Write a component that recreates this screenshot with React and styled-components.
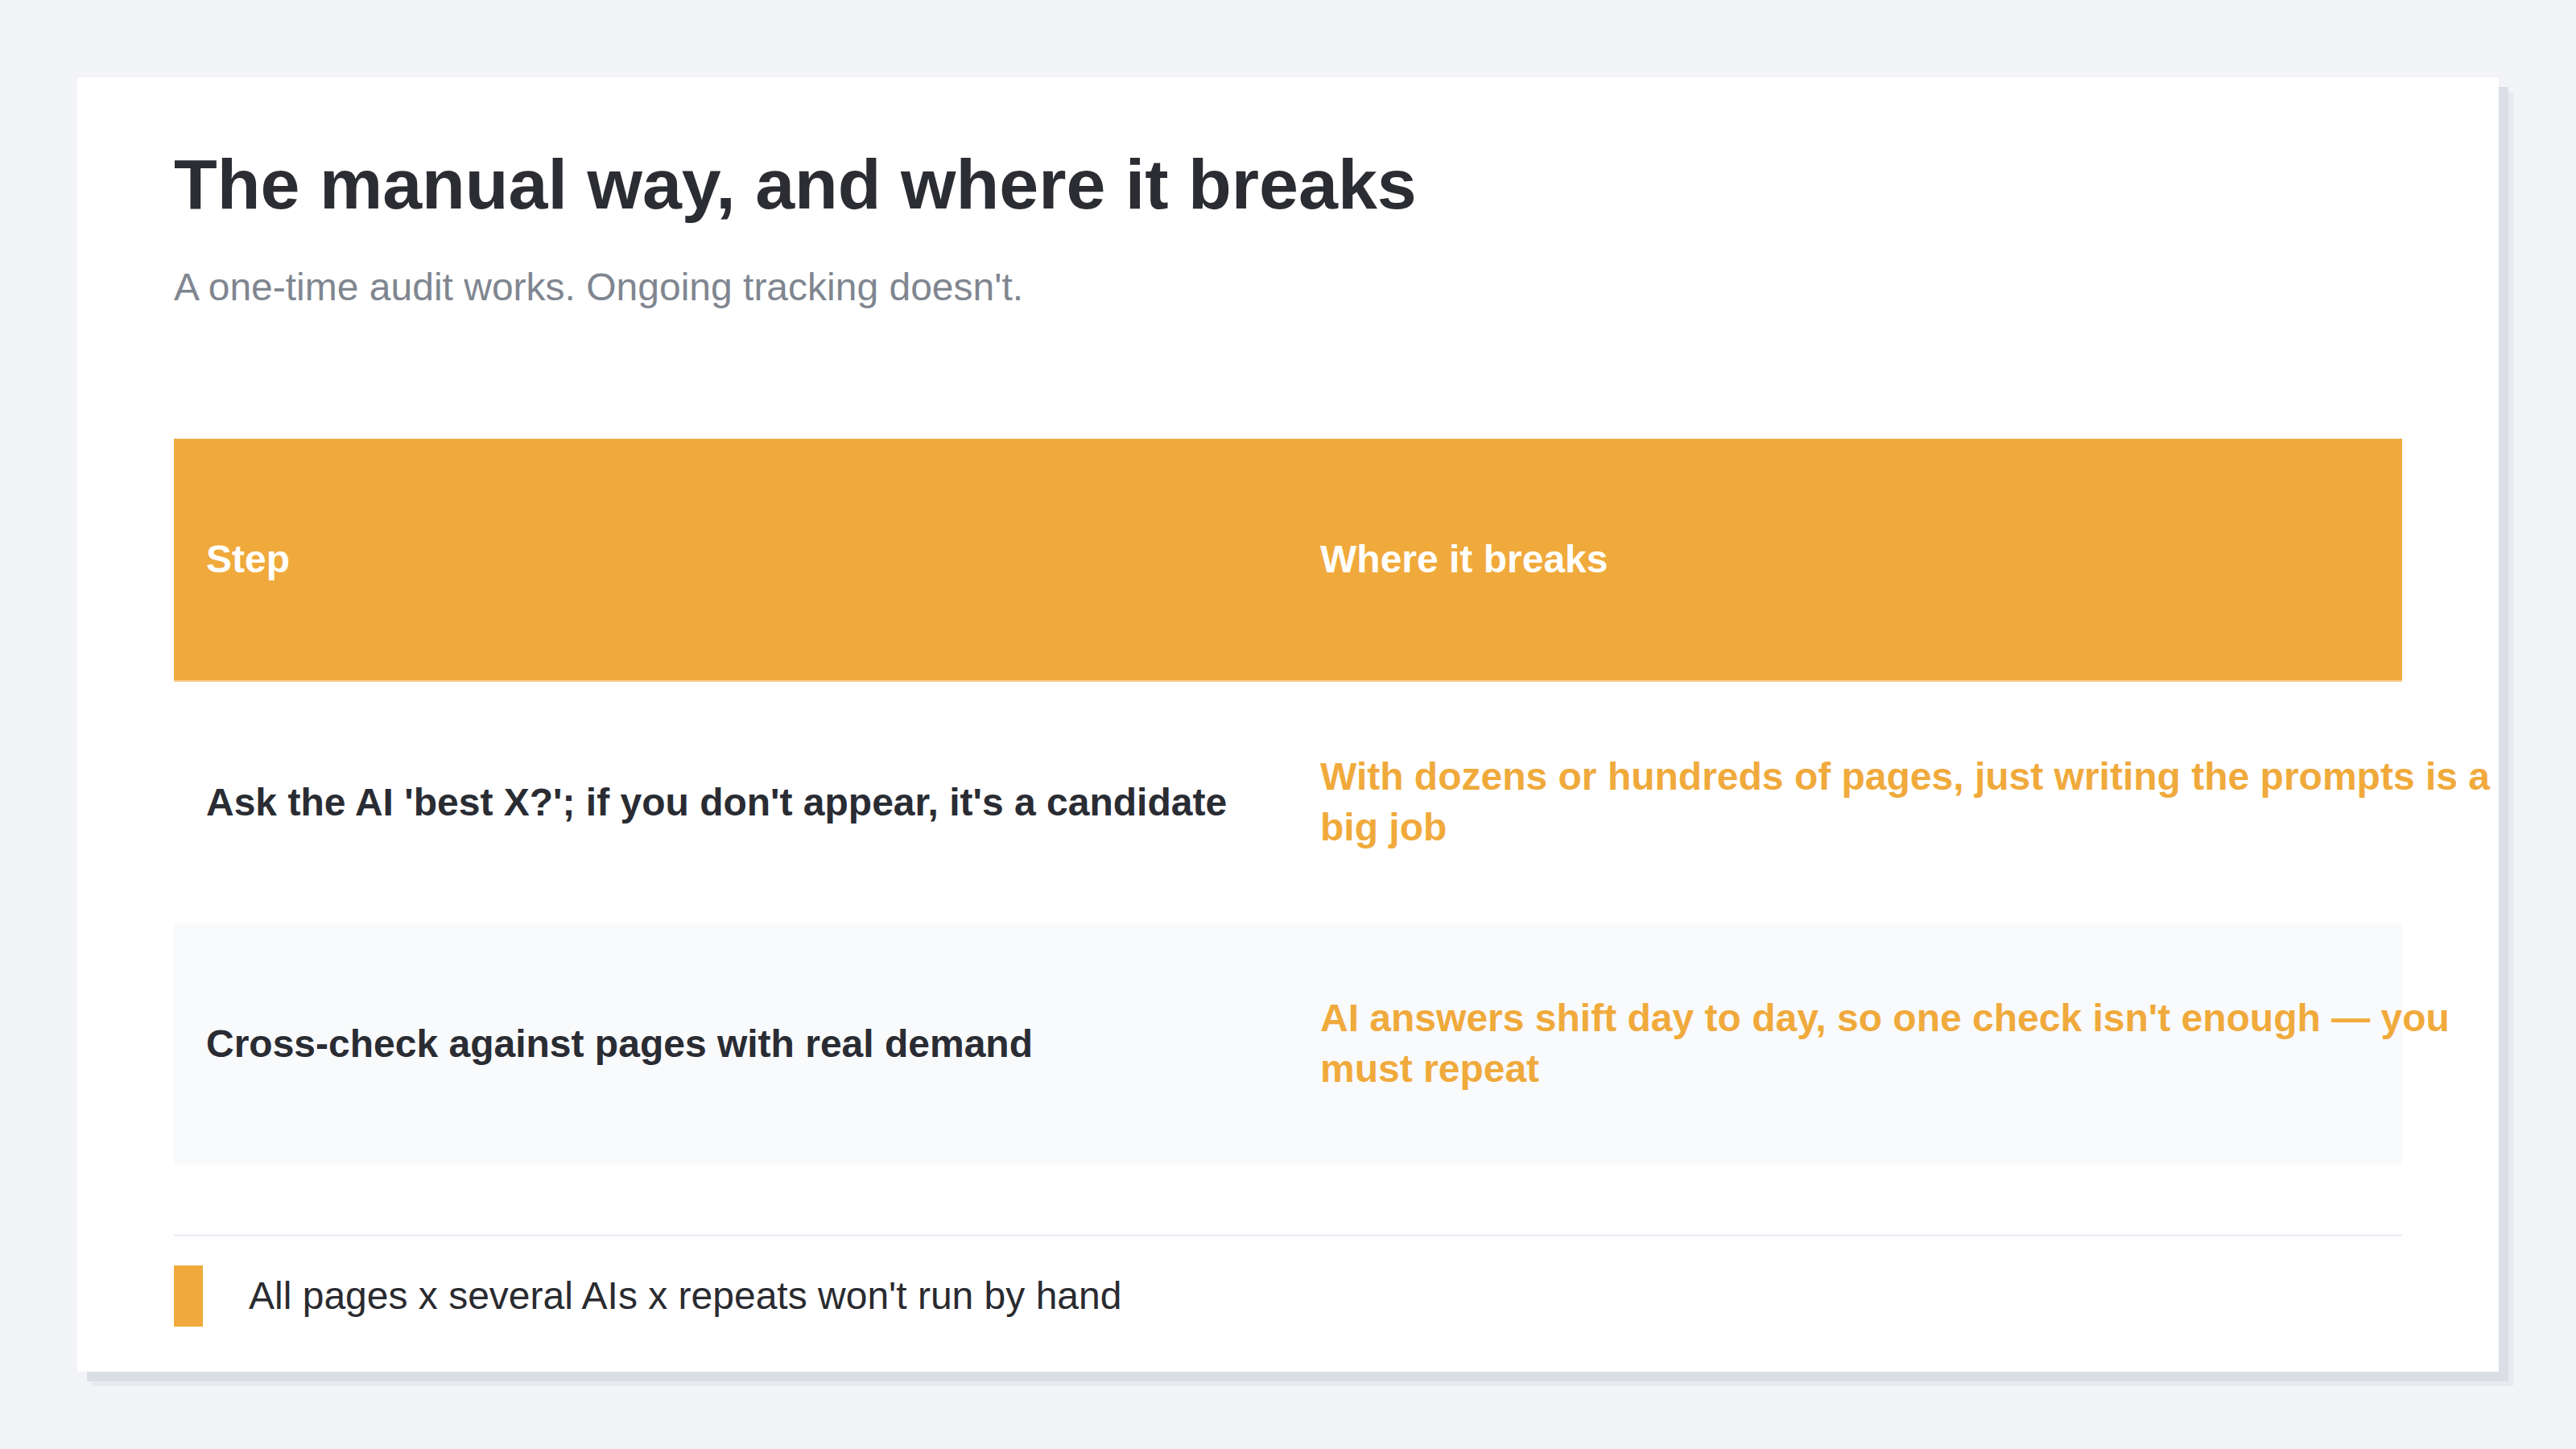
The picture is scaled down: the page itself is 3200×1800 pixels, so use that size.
import React from "react";
import styled, { createGlobalStyle } from "styled-components";

const rows = [
  {
    step: "Ask the AI 'best X?'; if you don't appear, it's a candidate",
    breaks: "With dozens or hundreds of pages, just writing the prompts is a big job",
  },
  {
    step: "Cross-check against pages with real demand",
    breaks: "AI answers shift day to day, so one check isn't enough — you must repeat",
  },
];

const App = () => {
  return (
    <>
      <GlobalStyle />
      <Page>
        <Card>
          <Title>The manual way, and where it breaks</Title>
          <Subtitle>A one-time audit works. Ongoing tracking doesn't.</Subtitle>
          <Table>
            <thead>
              <tr>
                <HeadCell>Step</HeadCell>
                <HeadCell>Where it breaks</HeadCell>
              </tr>
            </thead>
            <tbody>
              {rows.map((row, i) => (
                <Row key={i} $striped={i % 2 === 1}>
                  <StepCell>{row.step}</StepCell>
                  <BreakCell>
                    <BreakText>{row.breaks}</BreakText>
                  </BreakCell>
                </Row>
              ))}
            </tbody>
          </Table>
          <Footer>
            <Marker />
            <FooterText>All pages x several AIs x repeats won't run by hand</FooterText>
          </Footer>
        </Card>
      </Page>
    </>
  );
};

const GlobalStyle = createGlobalStyle`
  html, body {
    margin: 0;
    padding: 0;
    background: #f3f4f8;
    font-family: "Liberation Sans", Arial, sans-serif;
  }
`;

const Page = styled.div`
  padding: 96px;
  min-height: 100vh;
  box-sizing: border-box;
`;

const Card = styled.div`
  background: #ffffff;
  height: 1608px;
  box-sizing: border-box;
  padding: 80px 120px 56px;
  display: flex;
  flex-direction: column;
  box-shadow: 12px 12px 0 #dcdee5, 18px 18px 0 #e9eaf0;
`;

const Title = styled.h1`
  margin: 0;
  font-size: 88px;
  line-height: 1.2;
  font-weight: 700;
  color: #2b2d33;
`;

const Subtitle = styled.p`
  margin: 41px 0 0;
  font-size: 48px;
  line-height: 1.4;
  color: #808690;
`;

const Table = styled.table`
  margin-top: 155px;
  width: 100%;
  border-collapse: collapse;
  table-layout: fixed;
`;

const HeadCell = styled.th`
  height: 300px;
  padding: 0 40px;
  background: #f0aa3c;
  color: #ffffff;
  font-size: 48px;
  font-weight: 700;
  text-align: left;
  border-bottom: 2px solid #f6cf8e;
`;

const Row = styled.tr`
  background: ${(p) => (p.$striped ? "#f9fafc" : "#ffffff")};
`;

const StepCell = styled.td`
  height: 300px;
  padding: 0 40px;
  font-size: 48px;
  line-height: 1.3;
  font-weight: 700;
  color: #2a2c33;
  vertical-align: middle;
`;

const BreakCell = styled(StepCell)`
  color: #f0aa3c;
`;

const BreakText = styled.span`
  display: block;
  width: 1490px;
`;

const Footer = styled.div`
  margin-top: 86px;
  border-top: 3px solid #eef1f5;
  padding-top: 36px;
  display: flex;
  align-items: center;
  gap: 57px;
`;

const Marker = styled.div`
  width: 36px;
  height: 76px;
  background: #f0aa3c;
  flex-shrink: 0;
`;

const FooterText = styled.span`
  font-size: 48px;
  line-height: 1.4;
  color: #2a2b30;
`;

export default App;
